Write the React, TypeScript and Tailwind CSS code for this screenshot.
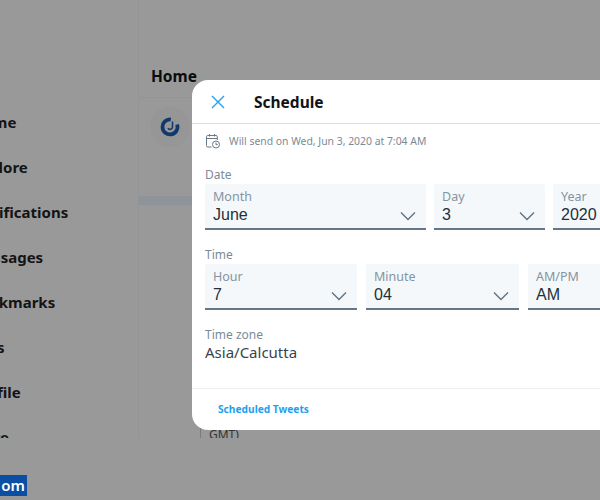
import React from "react";

const sans = "font-['Noto_Sans','Open_Sans',sans-serif]";
const nav = ["Home", "Explore", "Notifications", "Messages", "Bookmarks", "Lists", "Profile", "More"];
const navOffsets = ["-ml-[28px]", "-ml-[28px]", "-ml-[29px]", "-ml-[30px]", "-ml-[30px]", "-ml-[30px]", "-ml-[28px]", "-ml-[30px]"];

function Chevron() {
  return (
    <svg viewBox="0 0 16 10" className="absolute right-[10px] bottom-[7px] h-[10px] w-[16px]" fill="none" stroke="#5f7385" strokeWidth="1.4">
      <path d="M1 1.5 8 8.5 15 1.5" />
    </svg>
  );
}

function Select({ label, value, w }: { label: string; value: string; w: string }) {
  return (
    <div className={`relative h-[46px] shrink-0 rounded-t-[2px] border-b-2 border-[#64778a] bg-[#f5f8fa] pl-[8px] pt-[4px] ${w}`}>
      <div className={`${sans} -mb-[1px] text-[12.5px] leading-[18px] text-[#8494a0]`}>{label}</div>
      <div className="font-['Liberation_Sans',sans-serif] text-[16px] leading-[19px] text-[#22303c]">{value}</div>
      <Chevron />
    </div>
  );
}

export default function App() {
  return (
    <div className={`relative h-[500px] w-[600px] overflow-hidden bg-[#999999] ${sans}`}>
      <div className="flex h-[438px] overflow-hidden">
        <div className="h-full w-[139px] shrink-0 overflow-hidden border-r border-[#949494] pt-[100px]">
          {nav.map((n, i) => (
            <div key={n} className={`h-[45px] whitespace-nowrap text-[15px] font-bold leading-[45px] text-[#141414] ${navOffsets[i]}`}>
              {n}
            </div>
          ))}
        </div>
        <div className="w-[461px]">
          <div className="mt-[61px] h-[37px] border-b border-[#949494] pl-[12px] text-[15.5px] font-bold leading-[30px] text-[#0c0c0c]">Home</div>
          <div className="h-[98px] pl-[11px] pt-[9px]">
            <div className="flex h-[40px] w-[40px] items-center justify-center rounded-full bg-[#969696]">
              <svg viewBox="0 0 24 24" className="h-[20px] w-[20px]" fill="none" stroke="#11386b" strokeWidth="4.500">
                <path d="M13 3A9 9 0 1 0 20.500 9" />
                <path d="M15 5.500V12A3 3 0 0 1 9.500 13.500" strokeWidth="1.800" />
              </svg>
            </div>
          </div>
          <div className="h-[9px] bg-[#8e9499]" />
          <div className="ml-[61px] mt-[221px] whitespace-nowrap border-l border-[#7c7c7c] pl-[8px] text-[12px] leading-[18px] text-[#333]">GMT)</div>
        </div>
      </div>
      <div className="pointer-events-none absolute left-0 top-[475px] flex h-[21px] w-[27px] items-center justify-end bg-[#0b4fa5] pr-[2px] text-[15px] font-semibold text-white">
        om
      </div>

      <div className="absolute left-[192px] top-[80px] flex h-[350px] w-[502px] flex-col rounded-[16px] bg-white">
        <div className="flex h-[44px] shrink-0 items-center border-b border-[#d5e0e6] pl-[19px]">
          <svg viewBox="0 0 14 14" className="h-[14px] w-[14px]" fill="none" stroke="#1da1f2" strokeWidth="1.4">
            <path d="M1 1 13 13M13 1 1 13" />
          </svg>
          <div className="ml-[29px] text-[15.5px] font-bold leading-[20px] text-[#0f1419]">Schedule</div>
        </div>
        <div className="flex h-[33px] shrink-0 items-center pl-[13px]">
          <svg viewBox="0 0 16 16" className="h-[16px] w-[16px]" fill="none" stroke="#697a8a" strokeWidth="1">
            <path d="M6.5 14H2.8A1.3 1.3 0 0 1 1.5 12.7V3.8A1.3 1.3 0 0 1 2.8 2.5H11A1.3 1.3 0 0 1 12.3 3.8V7M1.5 5.5H12.3M4.5 1V3.5M9.500 1V3.500" />
            <circle cx="11" cy="11.500" r="3.500" />
            <path d="M11 9.500V11.700H12.800" />
          </svg>
          <div className="ml-[8px] text-[10.4px] leading-[16px] text-[#7b8a97]">Will send on Wed, Jun 3, 2020 at 7:04 AM</div>
        </div>
        <div className="flex flex-col pl-[13px]">
          <div className="mt-[9px] h-[18px] text-[12px] leading-[18px] text-[#7b8a97]">Date</div>
          <div className="flex gap-[8px]">
            <Select label="Month" value="June" w="w-[221px]" />
            <Select label="Day" value="3" w="w-[111px]" />
            <Select label="Year" value="2020" w="w-[127px]" />
          </div>
          <div className="mt-[16px] h-[18px] text-[12px] leading-[18px] text-[#7b8a97]">Time</div>
          <div className="flex gap-[9px]">
            <Select label="Hour" value="7" w="w-[152px]" />
            <Select label="Minute" value="04" w="w-[153px]" />
            <Select label="AM/PM" value="AM" w="w-[153px]" />
          </div>
          <div className="mt-[16px] h-[18px] text-[12px] leading-[18px] text-[#7b8a97]">Time zone</div>
          <div className="-mt-[2px] text-[15px] leading-[20px] text-[#38444d]">Asia/Calcutta</div>
        </div>
        <div className="mt-[26px] flex flex-1 items-center border-t border-[#eceff1] pb-[2px] pl-[26px]">
          <div className="text-[10.2px] font-bold leading-[16px] text-[#1da1f2]">Scheduled Tweets</div>
        </div>
      </div>
    </div>
  );
}
